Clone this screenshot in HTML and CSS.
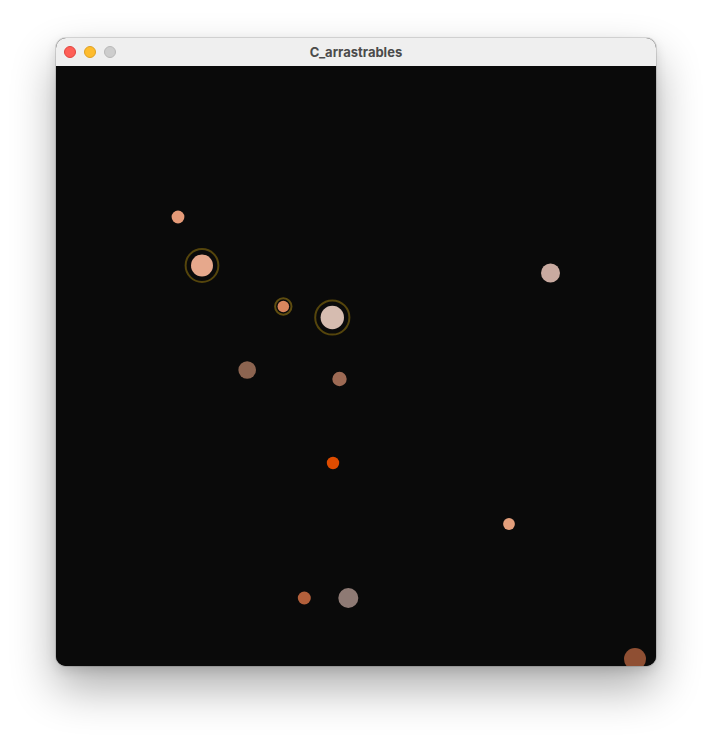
FILE: index.html
```html
<!DOCTYPE html>
<html>
<head>
<meta charset="utf-8">
<link rel="stylesheet" href="styles.css">
</head>
<body>
<div class="window">
  <div class="titlebar">
    <div class="lights">
      <span class="light red"></span>
      <span class="light yellow"></span>
      <span class="light gray"></span>
    </div>
    <div class="title">C_arrastrables</div>
  </div>
  <svg class="canvas" width="600" height="600" viewBox="0 0 600 600">
    <rect width="600" height="600" fill="#0a0a0a"/>
    <circle cx="122" cy="151" r="6.4" fill="#e59a78"/>
    <circle cx="146" cy="199.5" r="16.4" fill="none" stroke="#55450c" stroke-width="2"/>
    <circle cx="146" cy="199.5" r="11" fill="#e6a88c"/>
    <circle cx="227.3" cy="240.5" r="8.2" fill="none" stroke="#5f4d10" stroke-width="2"/>
    <circle cx="227.3" cy="240.5" r="5.8" fill="#d9865e"/>
    <circle cx="276.3" cy="251.5" r="17.1" fill="none" stroke="#55450c" stroke-width="2"/>
    <circle cx="276.3" cy="251.5" r="11.7" fill="#d6bcb0"/>
    <circle cx="191.2" cy="304" r="8.8" fill="#8c6450"/>
    <circle cx="283.5" cy="313" r="7.2" fill="#9d6a54"/>
    <circle cx="494.5" cy="207" r="9.5" fill="#c9aaa0"/>
    <circle cx="277" cy="397" r="6.2" fill="#de4c00"/>
    <circle cx="453" cy="458" r="5.9" fill="#e39f7c"/>
    <circle cx="248.3" cy="532" r="6.5" fill="#b3603b"/>
    <circle cx="292.3" cy="532" r="10" fill="#8e7a74"/>
    <circle cx="579" cy="593" r="11" fill="#8f4f33"/>
  </svg>
</div>
</body>
</html>
```
FILE: styles.css
```css
html, body {
  margin: 0;
  padding: 0;
  background: #ffffff;
}
body {
  box-sizing: border-box;
  min-height: 740px;
  padding: 38px 0 0 56px;
  font-family: "Inter", "Liberation Sans", sans-serif;
}
.window {
  width: 600px;
  border-radius: 10px;
  overflow: hidden;
  background: #0a0a0a;
  box-shadow: 0 0 0 1px rgba(0,0,0,0.12), 0 22px 45px rgba(0,0,0,0.32), 0 4px 12px rgba(0,0,0,0.12);
}
.titlebar {
  height: 28px;
  background: #efefef;
  display: flex;
  align-items: center;
  position: relative;
}
.lights {
  display: flex;
  gap: 8px;
  padding-left: 8px;
  position: relative;
  z-index: 1;
}
.light {
  width: 12px;
  height: 12px;
  border-radius: 50%;
  box-sizing: border-box;
}
.red { background: #fe5f57; border: 0.5px solid #e0443e; }
.yellow { background: #febc2e; border: 0.5px solid #dea123; }
.gray { background: #cdcdcd; border: 0.5px solid #b8b8b8; }
.title {
  position: absolute;
  left: 0;
  right: 0;
  top: 0;
  height: 28px;
  line-height: 28px;
  text-align: center;
  font-size: 13px;
  font-weight: 700;
  color: #4b4b4b;
}
.canvas {
  display: block;
}
```
